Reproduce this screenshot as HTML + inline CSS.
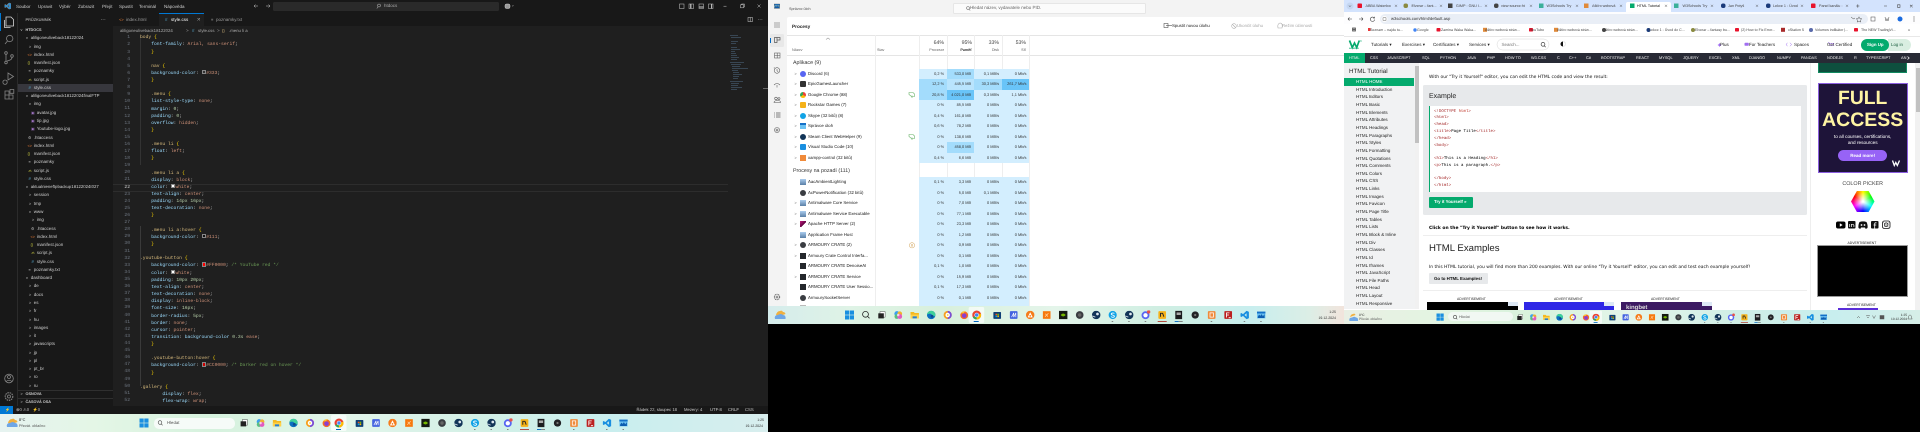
<!DOCTYPE html>
<html lang="cs"><head><meta charset="utf-8"><title>Screen</title>
<style>
html,body{margin:0;padding:0;background:#000;width:1920px;height:432px;overflow:hidden}
#w{position:relative;width:1920px;height:432px;overflow:hidden;filter:blur(.22px);font-family:"Liberation Sans",sans-serif;text-rendering:geometricPrecision;background:#000}
i{position:absolute;white-space:pre;line-height:0;font-style:normal}
.b{position:absolute}
svg{position:absolute;overflow:visible}
.vs{font-size:4.5px;color:#cccccc}
.vs i.k{color:#bbb;font-size:3.8px}
pre{position:absolute;margin:0;font:4.68px/7.115px "Liberation Mono",monospace;color:#cccccc;white-space:pre}
.s{color:#d7ba7d}.p{color:#9cdcfe}.v{color:#ce9178}.n{color:#b5cea8}.y{color:#ffd700}.c{color:#6a9955}
.sw{display:inline-block;width:2.4px;height:2.4px;border:.3px solid #888;margin-right:.3px;vertical-align:-.2px}
.r{position:absolute;left:787px;width:557px;height:10.5px;font-size:4.3px;color:#222}
.r>*{position:absolute;top:0;height:10.5px;line-height:10.5px;white-space:pre}
.r .nm{left:21px}
.r .ch{left:7.5px;color:#777;font-size:3.8px}
.r u{left:13px;top:2.2px;width:6px;height:6px;text-decoration:none;line-height:0}
.r s{text-decoration:none;background:#d3eefe;text-align:right;box-sizing:border-box;padding-right:2.6px;font-size:3.9px;color:#333}
.r s:nth-of-type(1){left:132px;width:27.7px}
.r s:nth-of-type(2){left:160px;width:26.7px}
.r s:nth-of-type(3){left:187px;width:27.7px}
.r s:nth-of-type(4){left:215px;width:27px}
.r s.m{background:#a3dcfc}.r s.h{background:#69c4f8}
.tm{font-size:4.3px;color:#333}
.ch3{font-size:3.7px;color:#444}
.bk{font-size:3.6px;color:#444}
.nv{font-size:3.9px;color:#f1f1f1}
.tp{font-size:4.5px;color:#222}
.sd{font-size:4.45px;color:#222}
.cd{font:4.1px "Liberation Mono",monospace;color:#000}
.cd b{font-weight:normal;color:#a52a2a}.cd em{font-style:normal;color:#c0392b}
.mn{font:4.45px "DejaVu Sans",sans-serif;color:#111}
.ad{font-size:3.4px;color:#222}
</style></head><body><div id="w">

<svg width="0" height="0" style="left:0;top:0"><defs>
<symbol id="tv" viewBox="0 0 10 10"><rect x="3" y="1" width="6" height="6.5" fill="#fff" stroke="#333" stroke-width=".5"/><rect x="1" y="3" width="6.5" height="6" fill="#222"/></symbol>
<symbol id="cp" viewBox="0 0 10 10"><circle cx="3.5" cy="3.5" r="3" fill="#3aa0f0"/><circle cx="6.8" cy="3.6" r="2.8" fill="#f0b030"/><circle cx="3.4" cy="6.8" r="2.8" fill="#58c080"/><circle cx="6.7" cy="6.7" r="2.9" fill="#e25ac0"/><circle cx="5" cy="5" r="1.5" fill="#fff" opacity=".7"/></symbol>
<symbol id="fo" viewBox="0 0 10 10"><path d="M0 1.5h4l1 1.2h5V9H0z" fill="#f5b921"/><path d="M0 4.5h10V9H0z" fill="#ffd24a"/><rect y="6.6" x="2.5" width="5" height="2.4" fill="#2a80d0"/></symbol>
<symbol id="ed" viewBox="0 0 10 10"><circle cx="5" cy="5" r="5" fill="#0c6fc0"/><path d="M0 5a5 5 0 0 1 10 0c0 2-4 2-4 .5C6 3 1.500 2.500 0 5z" fill="#3fd09a"/><circle cx="6" cy="6.500" r="1.700" fill="#0a4a90"/></symbol>
<symbol id="op" viewBox="0 0 10 10"><circle cx="5" cy="5" r="4.800" fill="#f7a020"/><path d="M5 .2a4.800 4.800 0 0 1 0 9.600z" fill="#7a4fd8"/><circle cx="5" cy="5" r="2.600" fill="#fff"/><circle cx="5" cy="5" r="1" fill="#f3ca30"/></symbol>
<symbol id="ff" viewBox="0 0 10 10"><circle cx="5" cy="5.300" r="4.600" fill="#f76a26"/><circle cx="5" cy="5.800" r="2.700" fill="#8a3fd0"/><path d="M1 3Q3 0 7 .8 4 2 5 3 2 3 1 3z" fill="#fcc030"/></symbol>
<symbol id="ch" viewBox="0 0 10 10"><circle cx="5" cy="5" r="5" fill="#ea4335"/><path d="M5 5L.7 7.500A5 5 0 0 0 5 10l2.500-.6z" fill="#34a853"/><path d="M5 5l4.800-1.500A5 5 0 0 1 5 10z" fill="#fbbc04"/><circle cx="5" cy="5" r="2.500" fill="#fff"/><circle cx="5" cy="5" r="1.900" fill="#4285f4"/></symbol>
<symbol id="st" viewBox="0 0 10 10"><rect x=".5" y="1.500" width="9" height="8" rx=".8" fill="#0f3f75"/><rect x="3" y="3.500" width="1.800" height="1.800" fill="#f25022"/><rect x="5.200" y="3.500" width="1.800" height="1.800" fill="#7fba00"/><rect x="3" y="5.700" width="1.800" height="1.800" fill="#00a4ef"/><rect x="5.200" y="5.700" width="1.800" height="1.800" fill="#ffb900"/></symbol>
<symbol id="ma" viewBox="0 0 10 10"><rect x=".5" y=".5" width="9" height="9" rx="1" fill="#4463e0"/><path d="M2.500 7.500L5 2.500v5M5 7.500L7.500 2.500v5" stroke="#fff" stroke-width=".8" fill="none"/></symbol>
<symbol id="av" viewBox="0 0 10 10"><circle cx="5" cy="5" r="5" fill="#f57c1c"/><path d="M5 1.800L8 7.800H2z" fill="#fff"/><circle cx="5" cy="6" r="1" fill="#f57c1c"/></symbol>
<symbol id="xo" viewBox="0 0 10 10"><rect x=".5" y=".5" width="9" height="9" fill="#f7780e"/><path d="M3 7L7 3M3.500 3.500L6.500 7" stroke="#ffd7a8" stroke-width=".8"/></symbol>
<symbol id="nv" viewBox="0 0 10 10"><rect width="10" height="10" fill="#151a12"/><path d="M2 5q3-3.500 6 0-3 3.500-6 0z" fill="#76b900"/></symbol>
<symbol id="ar" viewBox="0 0 10 10"><circle cx="5" cy="5" r="4.500" fill="#3a3d42"/><circle cx="5" cy="5" r="2" fill="#666"/></symbol>
<symbol id="sm" viewBox="0 0 10 10"><circle cx="5" cy="5" r="5" fill="#123558"/><circle cx="6.500" cy="3.800" r="1.600" fill="#dfe8ef"/><path d="M.3 6L4 7.500" stroke="#dfe8ef" stroke-width="1"/></symbol>
<symbol id="sk" viewBox="0 0 10 10"><circle cx="5" cy="5" r="4.800" fill="#11a3e6"/><path d="M7 3.200C6 2.300 3.300 2.500 3.300 3.900S7 5 7 6.500 4 8 3 6.800" stroke="#fff" stroke-width="1" fill="none"/></symbol>
<symbol id="di" viewBox="0 0 10 10"><circle cx="4.500" cy="5.500" r="4.400" fill="#5865f2"/><circle cx="4.500" cy="5.500" r="2.400" fill="#fff"/><circle cx="8" cy="1.800" r="1.900" fill="#e8504a"/></symbol>
<symbol id="rs" viewBox="0 0 10 10"><rect x=".5" y=".5" width="9" height="9" rx="1" fill="#f5b21a"/><path d="M3 7V3h2.500L7 7" stroke="#222" stroke-width="1.100" fill="none"/></symbol>
<symbol id="ac" viewBox="0 0 10 10"><rect x="1" width="8" height="10" fill="#1b1c1f"/><rect x="2.500" y="2" width="5" height="3" fill="#aaa"/></symbol>
<symbol id="bl" viewBox="0 0 10 10"><circle cx="5" cy="5" r="4.300" fill="#222326"/><circle cx="5" cy="5" r="1.300" fill="#777"/></symbol>
<symbol id="xa" viewBox="0 0 10 10"><rect x=".5" y=".5" width="9" height="9" rx="1" fill="#f08a3a"/><rect x="3" y="2.500" width="4" height="5" fill="none" stroke="#fff" stroke-width=".9"/></symbol>
<symbol id="fz" viewBox="0 0 10 10"><rect x=".5" y=".5" width="9" height="9" rx=".8" fill="#bb2020"/><path d="M3 8V2.500h3.500M3 5h3M5.500 8.200h2.500" stroke="#fff" stroke-width="1" fill="none"/></symbol>
<symbol id="vsc" viewBox="0 0 10 10"><path d="M7.200 0L10 1.300v7.400L7.200 10 3 6 1.200 7.400 0 6.700V3.300l1.200-.7L3 4zM7.200 3L4.800 5l2.400 2z" fill="#1a8fe0"/></symbol>
<symbol id="tm" viewBox="0 0 10 10"><rect y="1" width="10" height="8" fill="#6cc2f2"/><rect y="1" width="10" height="2.200" fill="#1470c8"/><path d="M1 7l1.500-2.500L4 6l1.500-2L7 6.500 9 4v4.500H1z" fill="#0c5cb0"/></symbol>
<g id="tb">
<rect x="87" y="-8" width="15.500" height="16" rx="1.500" fill="#fff" opacity=".65"/>
<use href="#tv" x="-4.250" y="-4.250" width="8.500" height="8.500"/><use href="#cp" x="12.250" y="-4.250" width="8.500" height="8.500"/><use href="#fo" x="28.750" y="-4.250" width="8.500" height="8.500"/><use href="#ed" x="45.250" y="-4.250" width="8.500" height="8.500"/><use href="#op" x="61.750" y="-4.250" width="8.500" height="8.500"/><use href="#ff" x="78.250" y="-4.250" width="8.500" height="8.500"/><use href="#ch" x="90.500" y="-4.500" width="9" height="9"/><use href="#st" x="111.250" y="-4.250" width="8.500" height="8.500"/><use href="#ma" x="127.750" y="-4.250" width="8.500" height="8.500"/><use href="#av" x="144.250" y="-4.250" width="8.500" height="8.500"/><use href="#xo" x="160.750" y="-4.250" width="8.500" height="8.500"/><use href="#nv" x="177.250" y="-4.250" width="8.500" height="8.500"/><use href="#ar" x="193.750" y="-4.250" width="8.500" height="8.500"/><use href="#sm" x="210.250" y="-4.250" width="8.500" height="8.500"/><use href="#sk" x="226.750" y="-4.250" width="8.500" height="8.500"/><use href="#sm" x="243.250" y="-4.250" width="8.500" height="8.500"/><use href="#di" x="259.750" y="-4.700" width="9" height="9"/><use href="#rs" x="276.250" y="-4.250" width="8.500" height="8.500"/><use href="#ac" x="292.750" y="-4.250" width="8.500" height="8.500"/><use href="#bl" x="309.250" y="-4.250" width="8.500" height="8.500"/><use href="#xa" x="325.750" y="-4.250" width="8.500" height="8.500"/><use href="#fz" x="342.250" y="-4.250" width="8.500" height="8.500"/><use href="#vsc" x="358.750" y="-4.250" width="8.500" height="8.500"/><use href="#tm" x="375.250" y="-4.250" width="8.500" height="8.500"/>
<rect x="92" y="6" width="5" height="1" fill="#0067c0"/><rect x="276" y="6" width="9" height=".9" fill="#b03a2e"/><rect x="293" y="6" width="4" height=".9" fill="#0067c0"/><rect x="297" y="6" width="4" height=".9" fill="#777"/>
<g fill="#777"><rect x="230" y="6" width="1.500" height=".9"/><rect x="246.500" y="6" width="1.500" height=".9"/><rect x="263" y="6" width="1.500" height=".9"/><rect x="329" y="6" width="1.500" height=".9"/><rect x="362" y="6" width="1.500" height=".9"/><rect x="378.500" y="6" width="1.500" height=".9"/></g>
</g>
</defs></svg>

<!-- ===== MONITOR 1: VS CODE ===== -->
<div class="b" style="left:0;top:0;width:768px;height:432px;background:#1f1f1f"></div>
<div class="b" style="left:0;top:0;width:768px;height:13px;background:#181818"></div>
<div class="b" style="left:0;top:13px;width:113px;height:393px;background:#181818"></div>
<div class="b" style="left:17px;top:13px;width:.4px;height:393px;background:#2b2b2b"></div>
<div class="b" style="left:113px;top:13px;width:655px;height:13px;background:#181818"></div>
<div class="b" style="left:159px;top:13px;width:45px;height:13px;background:#1f1f1f;border-top:.5px solid #0078d4;box-sizing:border-box"></div>
<div class="b" style="left:0;top:13px;width:1px;height:18px;background:#0078d4"></div>
<div class="b" style="left:273px;top:2px;width:226px;height:9px;background:#2a2a2a;border-radius:1.500px"></div>
<div class="b" style="left:18px;top:84px;width:95px;height:8px;background:#37373d"></div>
<div class="b" style="left:113px;top:184px;width:615px;height:7.500px;border-top:.4px solid #2d2d2d;border-bottom:.4px solid #2d2d2d;box-sizing:border-box"></div>
<div class="b" style="left:139.500px;top:35px;width:.4px;height:130px;background:#333"></div>
<div class="b" style="left:139.500px;top:226px;width:.4px;height:160px;background:#3a3a3a"></div>
<div class="b" style="left:0;top:406px;width:768px;height:8px;background:#181818"></div>
<div class="b" style="left:0;top:406px;width:13px;height:8px;background:#0078d4"></div>
<div class="b" style="left:18px;top:389.500px;width:95px;height:.4px;background:#2f2f2f"></div>
<div class="b" style="left:18px;top:398px;width:95px;height:.4px;background:#2f2f2f"></div>

<svg style="left:0;top:0" width="768" height="432" fill="none" stroke="#858585" stroke-width=".8">
<use href="#vsc" x="4.500" y="2.800" width="6.500" height="6.500"/>
<path d="M6 17h5l2.500 2.500V26H6zM4.500 20v7.500h6" stroke="#d7d7d7"/>
<circle cx="9.700" cy="38.500" r="3.200"/><path d="M7.500 41l-2.500 3"/>
<circle cx="6" cy="53" r="1.300"/><circle cx="6" cy="62.500" r="1.300"/><circle cx="12" cy="56" r="1.300"/><path d="M6 54.500v6.500M12 57.500q0 2.500-5 3.500"/>
<path d="M8 73l5.500 3.500L8 80zM5 80a2.200 2.200 0 1 0 .1 0"/>
<path d="M5 91h4v4h4v4H5zM5 95h4v4M10 89.500h3.800v3.800H10z"/>
<circle cx="9" cy="378.500" r="4.300"/><circle cx="9" cy="377" r="1.500"/><path d="M6 381.500q3-2.500 6 0"/>
<circle cx="9" cy="396.500" r="1.500"/><circle cx="9" cy="396.500" r="3.800" stroke-dasharray="1.500 .8" stroke-width="1.100"/>
<g stroke="#cccccc" stroke-width=".5"><path d="M254 6h4M254 6l1.500-1.500M254 6l1.500 1.500M270 6h-4M270 6l-1.500-1.500M270 6l-1.500 1.500"/>
<circle cx="379" cy="5.500" r="1.500"/><path d="M378 7l-1.200 1.500"/>
<rect x="505" y="4" width="5" height="4.500" rx="1.500" fill="#999"/><path d="M512 5.500l.8.8.8-.8"/>
<rect x="679.500" y="4" width="4.500" height="4.500"/><rect x="689" y="4" width="4.500" height="4.500"/><path d="M690.800 4v4.500" stroke-width="1.200"/><rect x="699" y="4" width="4.500" height="4.500"/><path d="M699 7h4.500" stroke-width="1"/><rect x="708.500" y="4" width="4.500" height="4.500"/><path d="M711.500 4v4.500" stroke-width=".9"/>
<path d="M723.500 6.200h3"/><rect x="740.500" y="4.800" width="3" height="3"/><path d="M741.500 4.800v-.8h3v3h-.9"/><path d="M757.500 4.500l3 3m0-3l-3 3"/>
<rect x="748" y="17.500" width="4.500" height="4"/><path d="M750.200 17.500v4"/><path d="M758 19.500h.6M759.800 19.500h.6M761.600 19.500h.6"/>
<path d="M101 19.500h.6M102.800 19.500h.6M104.600 19.500h.6"/>
<path d="M197.500 18l2.500 2.500m0-2.500l-2.500 2.500"/></g>
<g stroke="none" fill="#5a7a9a" opacity=".85"><rect x="730" y="35" width="8" height=".5"/><rect x="731" y="37" width="10" height=".5"/><rect x="731" y="41" width="7" height=".5"/><rect x="731" y="43" width="5" height=".5"/><rect x="731" y="47" width="6" height=".5"/><rect x="731" y="49" width="9" height=".5"/><rect x="731" y="51" width="4" height=".5"/><rect x="731" y="53" width="5" height=".5"/><rect x="731" y="55" width="6" height=".5"/><rect x="731" y="57" width="8" height=".5"/><rect x="731" y="59" width="6" height=".5"/><rect x="730" y="62" width="14" height=".5"/><rect x="731" y="64" width="10" height=".5"/><rect x="732" y="66" width="8" height=".5"/><rect x="732" y="68" width="16" height=".5"/><rect x="732" y="70" width="6" height=".5"/><rect x="733" y="72" width="6" height=".5"/><rect x="733" y="74" width="9" height=".5"/><rect x="733" y="76" width="6" height=".5"/><rect x="733" y="78" width="5" height=".5"/><rect x="730" y="81" width="13" height=".5"/><rect x="731" y="83" width="8" height=".5"/><rect x="731" y="85" width="7" height=".5"/><rect x="731" y="87" width="11" height=".5"/><rect x="731" y="89" width="6" height=".5"/></g>
<rect x="763" y="88" width="5" height=".7" fill="#888" stroke="none"/>
</svg>

<div class="vs">
<i style="left:16px;top:6.500px">Soubor</i><i style="left:38px;top:6.500px">Upravit</i><i style="left:59px;top:6.500px">Výběr</i><i style="left:78px;top:6.500px">Zobrazit</i><i style="left:102px;top:6.500px">Přejít</i><i style="left:119px;top:6.500px">Spustit</i><i style="left:139px;top:6.500px">Terminál</i><i style="left:164px;top:6.500px">Nápověda</i><i style="left:384px;top:6px;color:#aaa">htdocs</i>
<i style="left:25.500px;top:19.800px;font-size:3.900px">PRŮZKUMNÍK</i>
<i style="left:126px;top:20px;color:#999">index.html</i><i style="left:171px;top:20px;color:#fff">style.css</i><i style="left:216px;top:20px;color:#999">poznamky.txt</i>
<i style="left:119px;top:20px;color:#e37933;font-size:4px">&lt;&gt;</i><i style="left:165px;top:20px;color:#519aba;font-size:4.500px">#</i><i style="left:211px;top:20px;color:#999;font-size:4px">≡</i>
<i style="left:120px;top:30.500px;color:#a9a9a9;font-size:4.300px">aliligoneuliveback18122024</i><i style="left:186px;top:30.500px;color:#999">&gt;</i><i style="left:192px;top:30.500px;color:#519aba">#</i><i style="left:198px;top:30.500px;color:#a9a9a9;font-size:4.300px">style.css</i><i style="left:217px;top:30.500px;color:#999">&gt;</i><i style="left:222px;top:30.500px;color:#d7ba7d;font-size:4px">{}</i><i style="left:229px;top:30.500px;color:#a9a9a9;font-size:4.300px">.menu li a</i>

<i style="left:25.500px;top:30px;font-weight:bold;font-size:3.800px">HTDOCS</i><i class="k" style="left:20.500px;top:30px">v</i>
<i class="k" style="left:26px;top:38.300px">v</i><i style="left:30.700px;top:38.300px;font-size:4.300px">aliligoneuliveback18122024</i>
<i class="k" style="left:29px;top:46.500px">&gt;</i><i style="left:33.700px;top:46.500px">img</i>
<i class="k" style="left:27.500px;top:54.800px;color:#e37933">&lt;&gt;</i><i style="left:33.700px;top:54.800px">index.html</i>
<i class="k" style="left:27.500px;top:63.100px;color:#cbcb41">{}</i><i style="left:33.700px;top:63.100px">manifest.json</i>
<i class="k" style="left:28.500px;top:71.400px">≡</i><i style="left:33.700px;top:71.400px">poznamky</i>
<i class="k" style="left:28px;top:79.600px;color:#cbcb41;font-size:3px">JS</i><i style="left:33.700px;top:79.600px">script.js</i>
<i class="k" style="left:28.500px;top:87.900px;color:#519aba;font-size:4.300px">#</i><i style="left:33.700px;top:87.900px">style.css</i>
<i class="k" style="left:26px;top:96.200px">v</i><i style="left:30.700px;top:96.200px;font-size:4.300px">aliligoneuliveback18122024finalFTP</i>
<i class="k" style="left:29px;top:104.400px">v</i><i style="left:33.700px;top:104.400px">img</i>
<i class="k" style="left:31px;top:112.700px;color:#a074c4">▣</i><i style="left:36.700px;top:112.700px">avatar.jpg</i>
<i class="k" style="left:31px;top:121px;color:#a074c4">▣</i><i style="left:36.700px;top:121px">tip.jpg</i>
<i class="k" style="left:31px;top:129.200px;color:#a074c4">▣</i><i style="left:36.700px;top:129.200px">Youtube-logo.jpg</i>
<i class="k" style="left:28px;top:137.500px">⚙</i><i style="left:33.700px;top:137.500px">.htaccess</i>
<i class="k" style="left:27.500px;top:145.800px;color:#e37933">&lt;&gt;</i><i style="left:33.700px;top:145.800px">index.html</i>
<i class="k" style="left:27.500px;top:154.100px;color:#cbcb41">{}</i><i style="left:33.700px;top:154.100px">manifest.json</i>
<i class="k" style="left:28.500px;top:162.300px">≡</i><i style="left:33.700px;top:162.300px">poznamky</i>
<i class="k" style="left:28px;top:170.600px;color:#cbcb41;font-size:3px">JS</i><i style="left:33.700px;top:170.600px">script.js</i>
<i class="k" style="left:28.500px;top:178.900px;color:#519aba;font-size:4.300px">#</i><i style="left:33.700px;top:178.900px">style.css</i>
<i class="k" style="left:26px;top:187.100px">v</i><i style="left:30.700px;top:187.100px;font-size:4.300px">aktualnieneftpbackup18122024t027</i>
<i class="k" style="left:29px;top:195.400px">&gt;</i><i style="left:33.700px;top:195.400px">session</i>
<i class="k" style="left:29px;top:203.700px">&gt;</i><i style="left:33.700px;top:203.700px">tmp</i>
<i class="k" style="left:29px;top:211.900px">v</i><i style="left:33.700px;top:211.900px">www</i>
<i class="k" style="left:32px;top:220.200px">&gt;</i><i style="left:36.700px;top:220.200px">img</i>
<i class="k" style="left:31px;top:228.500px">⚙</i><i style="left:36.700px;top:228.500px">.htaccess</i>
<i class="k" style="left:30.500px;top:236.800px;color:#e37933">&lt;&gt;</i><i style="left:36.700px;top:236.800px">index.html</i>
<i class="k" style="left:30.500px;top:245px;color:#cbcb41">{}</i><i style="left:36.700px;top:245px">manifest.json</i>
<i class="k" style="left:31px;top:253.300px;color:#cbcb41;font-size:3px">JS</i><i style="left:36.700px;top:253.300px">script.js</i>
<i class="k" style="left:31.500px;top:261.600px;color:#519aba;font-size:4.300px">#</i><i style="left:36.700px;top:261.600px">style.css</i>
<i class="k" style="left:28.500px;top:269.800px">≡</i><i style="left:33.700px;top:269.800px">poznamky.txt</i>
<i class="k" style="left:26px;top:278.100px">v</i><i style="left:30.700px;top:278.100px">dashboard</i>
<i class="k" style="left:29px;top:286.400px">&gt;</i><i style="left:33.700px;top:286.400px">de</i>
<i class="k" style="left:29px;top:294.600px">&gt;</i><i style="left:33.700px;top:294.600px">docs</i>
<i class="k" style="left:29px;top:302.900px">&gt;</i><i style="left:33.700px;top:302.900px">es</i>
<i class="k" style="left:29px;top:311.200px">&gt;</i><i style="left:33.700px;top:311.200px">fr</i>
<i class="k" style="left:29px;top:319.500px">&gt;</i><i style="left:33.700px;top:319.500px">hu</i>
<i class="k" style="left:29px;top:327.700px">&gt;</i><i style="left:33.700px;top:327.700px">images</i>
<i class="k" style="left:29px;top:336px">&gt;</i><i style="left:33.700px;top:336px">it</i>
<i class="k" style="left:29px;top:344.300px">&gt;</i><i style="left:33.700px;top:344.300px">javascripts</i>
<i class="k" style="left:29px;top:352.500px">&gt;</i><i style="left:33.700px;top:352.500px">jp</i>
<i class="k" style="left:29px;top:360.800px">&gt;</i><i style="left:33.700px;top:360.800px">pl</i>
<i class="k" style="left:29px;top:369.100px">&gt;</i><i style="left:33.700px;top:369.100px">pt_br</i>
<i class="k" style="left:29px;top:377.300px">&gt;</i><i style="left:33.700px;top:377.300px">ro</i>
<i class="k" style="left:29px;top:385.600px">&gt;</i><i style="left:33.700px;top:385.600px">ru</i>
<i class="k" style="left:20.500px;top:393.700px">&gt;</i><i style="left:25.500px;top:393.700px;font-weight:bold;font-size:3.800px">OSNOVA</i>
<i class="k" style="left:20.500px;top:402px">&gt;</i><i style="left:25.500px;top:402px;font-weight:bold;font-size:3.800px">ČASOVÁ OSA</i>

<i style="left:16px;top:410px;font-size:4.200px">⊗0 ⚠0   ⚡0</i><i style="left:5px;top:410px;font-size:4px;color:#fff">⚡</i>
<i style="left:636.500px;top:410px;font-size:4.200px">Řádek 22, sloupec 18</i><i style="left:684px;top:410px;font-size:4.200px">Mezery: 4</i><i style="left:710px;top:410px;font-size:4.200px">UTF-8</i><i style="left:728px;top:410px;font-size:4.200px">CRLF</i><i style="left:745px;top:410px;font-size:4.200px">CSS</i>
</div>

<pre style="left:113px;top:34.300px;width:17px;text-align:right;color:#6e7681">1
2
3
4
5
6
7
8
9
10
11
12
13
14
15
16
17
18
19
20
21
<span style="color:#ccc">22</span>
23
24
25
26
27
28
29
30
31
32
33
34
35
36
37
38
39
40
41
42
43
44
45
46
47
48
49
50
51
52</pre>
<pre style="left:140px;top:34.300px"><span class="s">body</span> <span class="y">{</span>
    <span class="p">font-family</span>: <span class="v">Arial, sans-serif</span>;
    <span class="y">}</span>

    <span class="s">nav</span> <span class="y">{</span>
    <span class="p">background-color</span>: <span class="sw" style="background:#333"></span><span class="v">#333</span>;
    <span class="y">}</span>

    <span class="s">.menu</span> <span class="y">{</span>
    <span class="p">list-style-type</span>: <span class="v">none</span>;
    <span class="p">margin</span>: <span class="n">0</span>;
    <span class="p">padding</span>: <span class="n">0</span>;
    <span class="p">overflow</span>: <span class="v">hidden</span>;
    <span class="y">}</span>

    <span class="s">.menu li</span> <span class="y">{</span>
    <span class="p">float</span>: <span class="v">left</span>;
    <span class="y">}</span>

    <span class="s">.menu li a</span> <span class="y">{</span>
    <span class="p">display</span>: <span class="v">block</span>;
    <span class="p">color</span>: <span class="sw" style="background:#fff"></span><span class="v">white</span>;
    <span class="p">text-align</span>: <span class="v">center</span>;
    <span class="p">padding</span>: <span class="n">14px 16px</span>;
    <span class="p">text-decoration</span>: <span class="v">none</span>;
    <span class="y">}</span>

    <span class="s">.menu li a:hover</span> <span class="y">{</span>
    <span class="p">background-color</span>: <span class="sw" style="background:#111"></span><span class="v">#111</span>;
    <span class="y">}</span>

<span class="s">.youtube-button</span> <span class="y">{</span>
    <span class="p">background-color</span>: <span class="sw" style="background:#f00"></span><span class="v">#FF0000</span>; <span class="c">/* YouTube red */</span>
    <span class="p">color</span>: <span class="sw" style="background:#fff"></span><span class="v">white</span>;
    <span class="p">padding</span>: <span class="n">10px 20px</span>;
    <span class="p">text-align</span>: <span class="v">center</span>;
    <span class="p">text-decoration</span>: <span class="v">none</span>;
    <span class="p">display</span>: <span class="v">inline-block</span>;
    <span class="p">font-size</span>: <span class="n">16px</span>;
    <span class="p">border-radius</span>: <span class="n">5px</span>;
    <span class="p">border</span>: <span class="v">none</span>;
    <span class="p">cursor</span>: <span class="v">pointer</span>;
    <span class="p">transition</span>: <span class="p">background-color</span> <span class="n">0.3s</span> <span class="v">ease</span>;
    <span class="y">}</span>

    <span class="s">.youtube-button:hover</span> <span class="y">{</span>
    <span class="p">background-color</span>: <span class="sw" style="background:#c00"></span><span class="v">#CC0000</span>; <span class="c">/* Darker red on hover */</span>
    <span class="y">}</span>

<span class="s">.gallery</span> <span class="y">{</span>
        <span class="p">display</span>: <span class="v">flex</span>;
        <span class="p">flex-wrap</span>: <span class="v">wrap</span>;</pre>

<!-- taskbar 1 -->
<div class="b" style="left:0;top:414px;width:768px;height:18px;background:linear-gradient(90deg,#e6f3f0 0,#e4f6e6 12%,#d6f2de 28%,#e2f5ea 45%,#d3f0e6 62%,#c9eeee 80%,#d8eeee 100%)"></div>
<div class="b" style="left:154px;top:418px;width:81px;height:10.500px;background:#f6fbf8;border-radius:5px"></div>
<svg style="left:0;top:414px" width="768" height="18">
<path d="M8 9q1-4 4-4 2-1 3 1 2 0 2.500 2-7 3-9.500 1z" fill="#f0b040"/><path d="M7 13q-1-4 3-4 3-2 5 0 3 0 2.500 4z" fill="#6ea6e6"/>
<g fill="#1a8fe0"><rect x="139.500" y="4.500" width="4.200" height="4.200"/><rect x="144.300" y="4.500" width="4.200" height="4.200"/><rect x="139.500" y="9.300" width="4.200" height="4.200"/><rect x="144.300" y="9.300" width="4.200" height="4.200"/></g>
<circle cx="160" cy="8.500" r="1.800" fill="none" stroke="#444" stroke-width=".6"/><path d="M161.300 10l1.300 1.300" stroke="#444" stroke-width=".6"/>
<use href="#tb" x="244" y="9"/></svg>
<i style="left:19px;top:420px;font-size:3.800px;color:#222">8°C</i><i style="left:19px;top:425.500px;font-size:3.800px;color:#555">Převát. oblačno</i>
<i style="left:167px;top:423px;font-size:4.300px;color:#555">Hledat</i>
<i style="right:1156px;top:420px;font-size:3.500px;color:#333">1:25</i><i style="right:1157px;top:426px;font-size:3.500px;color:#333">19.12.2024</i>

<!-- ===== MONITOR 2: TASK MANAGER ===== -->
<div class="b" style="left:768px;top:0;width:576px;height:324px;background:#f3f3f3"></div>
<div class="b" style="left:787px;top:17px;width:557px;height:290px;background:#fff;border-top-left-radius:2px"></div>
<div class="b" style="left:953px;top:3px;width:193px;height:10.500px;background:#fbfbfb;border:.3px solid #e6e6e6;border-radius:1.500px;box-sizing:border-box"></div>
<div class="b" style="left:770px;top:34px;width:14px;height:12.500px;background:#e8e8e8;border-radius:1.500px"></div>
<div class="b" style="left:769.500px;top:37.500px;width:1px;height:5.500px;background:#0067c0"></div>
<div class="b" style="left:787px;top:35px;width:557px;height:.4px;background:#e5e5e5"></div>
<div class="b" style="left:787px;top:54.500px;width:557px;height:.4px;background:#e5e5e5"></div>
<div class="b" style="left:874.800px;top:35px;width:.4px;height:272px;background:#eee"></div>
<div class="b" style="left:919px;top:35px;width:.4px;height:272px;background:#eee"></div>
<div class="b" style="left:946.700px;top:35px;width:.4px;height:272px;background:#eee"></div>
<div class="b" style="left:974px;top:35px;width:.4px;height:272px;background:#eee"></div>
<div class="b" style="left:1001.600px;top:35px;width:.4px;height:272px;background:#eee"></div>
<div class="b" style="left:1028.800px;top:35px;width:.4px;height:272px;background:#eee"></div>
<svg style="left:768px;top:0" width="576" height="324" fill="none" stroke="#555" stroke-width=".55">
<use href="#tm" x="6" y="3.500" width="6" height="5.500"/>
<path d="M6 23h6M6 25h6M6 27h6"/><path d="M6.500 37.500h2.500v5H6.500zM9 37.500h3v2.500H9z" stroke-width=".7"/><rect x="6.500" y="53" width="5.500" height="5"/><path d="M6.500 55.500h5.500M9.200 53v5"/><circle cx="9" cy="70.500" r="2.800"/><path d="M9 69v1.800l1.200.8M5.800 68l1-.2"/><path d="M6 85q3-3 6 0M9 85v2.500"/><circle cx="8" cy="98.500" r="1.300"/><circle cx="11" cy="98.500" r="1"/><path d="M6 102.500q0-2 4-2 2.500 0 2.500 2z"/><path d="M6 113h.8M6 115h.8M6 117h.8M8 113h4.500M8 115h4.500M8 117h4.500" stroke-width=".7"/><circle cx="9" cy="130" r="2.500"/><circle cx="9" cy="130" r="1" /><circle cx="9" cy="297" r="2.700" stroke-dasharray="1.100 .6" stroke-width=".9"/><circle cx="9" cy="297" r="1"/>
<path d="M58 39.500l2-1.500 2 1.500" stroke="#999"/>
<circle cx="200" cy="8" r="1.400" stroke="#666"/><path d="M201 9.200l1.200 1.200" stroke="#666"/>
<g stroke="#67b167" stroke-width=".6"><path d="M141 92.500h4l1.500 1.500v2.500h-3l-2.500-2z M144 95.500v2.500"/><path d="M141 134.500h4l1.500 1.500v2.500h-3l-2.500-2z M144 137.500v2.500"/></g>
<circle cx="144" cy="245.300" r="2.600" stroke="#d8b070"/><path d="M143.300 244v2.600M144.700 244v2.600" stroke="#d8b070"/>
<rect x="396" y="23.500" width="4" height="4" stroke="#444"/><path d="M398 25.500h6" stroke="#444"/>
<circle cx="466" cy="26" r="2.300" stroke="#aaa"/><path d="M464.500 24.500l3 3" stroke="#aaa"/>
<path d="M510 28q-1-4 2-5 3 0 2 5z" stroke="#aaa"/>
</svg>
<div class="tm">
<i style="left:789px;top:8.500px;font-size:3.700px;color:#555">Správce úloh</i>
<i style="left:970px;top:8.300px;font-size:4.500px;color:#666">Hledat název, vydavatele nebo PID.</i>
<i style="left:792px;top:26.500px;font-size:4.700px;font-weight:bold;color:#222">Procesy</i>
<i style="left:1172px;top:26px;color:#222">Spustit novou úlohu</i><i style="left:1237px;top:26px;color:#aaa">Ukončit úlohu</i><i style="left:1282px;top:26px;color:#aaa">Režim účinnosti</i>
<i style="left:792px;top:50px;font-size:3.700px;color:#666">Název</i><i style="left:877px;top:50px;font-size:3.700px;color:#666">Stav</i>
<i style="right:976px;top:42.500px;font-size:5.200px;color:#444">64%</i><i style="right:948px;top:42.500px;font-size:5.200px;color:#444">95%</i><i style="right:921px;top:42.500px;font-size:5.200px;color:#444">33%</i><i style="right:894px;top:42.500px;font-size:5.200px;color:#444">53%</i>
<i style="right:976px;top:50px;font-size:3.700px;color:#666">Procesor</i><i style="right:948px;top:50px;font-size:3.700px;font-weight:bold;color:#333">Paměť</i><i style="right:921px;top:50px;font-size:3.700px;color:#666">Disk</i><i style="right:894px;top:50px;font-size:3.700px;color:#666">Síť</i>
<i style="left:793px;top:62.500px;font-size:5.300px;color:#333">Aplikace (9)</i>
<i style="left:793px;top:171.300px;font-size:5.300px;color:#333">Procesy na pozadí (111)</i>
</div>
<div class="r" style="top:68.500px"><b class="ch" style="font-weight:normal">&gt;</b><u style="background:#5865f2;border-radius:50%"></u><span class="nm">Discord (6)</span><s>0,2 %</s><s class="m">533,0 MB</s><s>0,1 MB/s</s><s>0 Mb/s</s></div>
<div class="r" style="top:79px"><b class="ch" style="font-weight:normal">&gt;</b><u style="background:#333;border-radius:1px"></u><span class="nm">EpicGamesLauncher</span><s class="m">12,2 %</s><s class="m" style="background:#b9e4fd">445,5 MB</s><s class="m">30,3 MB/s</s><s class="h">261,7 Mb/s</s></div>
<div class="r" style="top:89.500px"><b class="ch" style="font-weight:normal">&gt;</b><u style="background:conic-gradient(#ea4335 0 33%,#fbbc04 33% 66%,#34a853 66%);border-radius:50%"></u><span class="nm">Google Chrome (88)</span><s class="m">20,8 %</s><s class="h">4 021,0 MB</s><s>0,3 MB/s</s><s>1,1 Mb/s</s></div>
<div class="r" style="top:100px"><b class="ch" style="font-weight:normal">&gt;</b><u style="background:#f5b21a;border-radius:1px"></u><span class="nm">Rockstar Games (7)</span><s>0 %</s><s>85,5 MB</s><s>0 MB/s</s><s>0 Mb/s</s></div>
<div class="r" style="top:110.500px"><b class="ch" style="font-weight:normal">&gt;</b><u style="background:#11a3e6;border-radius:50%"></u><span class="nm">Skype (32 bitů) (8)</span><s>0,4 %</s><s>161,8 MB</s><s>0 MB/s</s><s>0 Mb/s</s></div>
<div class="r" style="top:121px"><b class="ch" style="font-weight:normal">&gt;</b><u style="background:linear-gradient(#1470c8 35%,#6cc2f2 35%)"></u><span class="nm">Správce úloh</span><s>0,6 %</s><s>78,2 MB</s><s>0 MB/s</s><s>0 Mb/s</s></div>
<div class="r" style="top:131.500px"><b class="ch" style="font-weight:normal">&gt;</b><u style="background:#123558;border-radius:50%"></u><span class="nm">Steam Client WebHelper (9)</span><s>0 %</s><s>138,6 MB</s><s>0 MB/s</s><s>0 Mb/s</s></div>
<div class="r" style="top:142px"><b class="ch" style="font-weight:normal">&gt;</b><u style="background:#1a8fe0;border-radius:1px"></u><span class="nm">Visual Studio Code (10)</span><s>0 %</s><s class="m">458,0 MB</s><s>0 MB/s</s><s>0 Mb/s</s></div>
<div class="r" style="top:152.500px"><b class="ch" style="font-weight:normal">&gt;</b><u style="background:#f08a3a"></u><span class="nm">xampp-control (32 bitů)</span><s>0,4 %</s><s>6,6 MB</s><s>0 MB/s</s><s>0 Mb/s</s></div>

<div class="r" style="top:177px"><u style="background:linear-gradient(#aaccee,#5a7fa6)"></u><span class="nm">AacAmbientLighting</span><s>0,1 %</s><s>3,3 MB</s><s>0 MB/s</s><s>0 Mb/s</s></div>
<div class="r" style="top:187.500px"><u style="background:#3a3d42;border-radius:50%"></u><span class="nm">AcPowerNotification (32 bitů)</span><s>0 %</s><s>5,0 MB</s><s>0,1 MB/s</s><s>0 Mb/s</s></div>
<div class="r" style="top:198px"><b class="ch" style="font-weight:normal">&gt;</b><u style="background:linear-gradient(#aaccee,#5a7fa6)"></u><span class="nm">Antimalware Core Service</span><s>0 %</s><s>7,0 MB</s><s>0 MB/s</s><s>0 Mb/s</s></div>
<div class="r" style="top:208.500px"><b class="ch" style="font-weight:normal">&gt;</b><u style="background:linear-gradient(#aaccee,#5a7fa6)"></u><span class="nm">Antimalware Service Executable</span><s>0 %</s><s>77,1 MB</s><s>0 MB/s</s><s>0 Mb/s</s></div>
<div class="r" style="top:219px"><b class="ch" style="font-weight:normal">&gt;</b><u style="background:linear-gradient(135deg,#c02080,#600040 60%,#fff 60%)"></u><span class="nm">Apache HTTP Server (2)</span><s>0 %</s><s>23,3 MB</s><s>0 MB/s</s><s>0 Mb/s</s></div>
<div class="r" style="top:229.500px"><u style="background:linear-gradient(#aaccee,#5a7fa6)"></u><span class="nm">Application Frame Host</span><s>0 %</s><s>1,2 MB</s><s>0 MB/s</s><s>0 Mb/s</s></div>
<div class="r" style="top:240px"><b class="ch" style="font-weight:normal">&gt;</b><u style="background:#3a3d42;border-radius:50%"></u><span class="nm">ARMOURY CRATE (2)</span><s>0 %</s><s>0,9 MB</s><s>0 MB/s</s><s>0 Mb/s</s></div>
<div class="r" style="top:250.500px"><b class="ch" style="font-weight:normal">&gt;</b><u style="background:#24272b"></u><span class="nm">Armoury Crate Control Interfa...</span><s>0 %</s><s>0,1 MB</s><s>0 MB/s</s><s>0 Mb/s</s></div>
<div class="r" style="top:261px"><u style="background:#24272b"></u><span class="nm">ARMOURY CRATE DenoiseAI</span><s>0,1 %</s><s>1,0 MB</s><s>0 MB/s</s><s>0 Mb/s</s></div>
<div class="r" style="top:271.500px"><b class="ch" style="font-weight:normal">&gt;</b><u style="background:#24272b"></u><span class="nm">ARMOURY CRATE Service</span><s>0 %</s><s>15,9 MB</s><s>0 MB/s</s><s>0 Mb/s</s></div>
<div class="r" style="top:282px"><u style="background:#24272b"></u><span class="nm">ARMOURY CRATE User Sessio...</span><s>0,1 %</s><s>17,3 MB</s><s>0 MB/s</s><s>0 Mb/s</s></div>
<div class="r" style="top:292.500px"><u style="background:#3a3d42;border-radius:50%"></u><span class="nm">ArmourySocketServer</span><s>0 %</s><s>0,1 MB</s><s>0 MB/s</s><s>0 Mb/s</s></div>
<div class="r" style="top:303px"><u style="background:#bbb"></u><s></s><s></s><s></s><s></s></div>

<!-- taskbar 2 -->
<div class="b" style="left:768px;top:306px;width:576px;height:18px;background:linear-gradient(90deg,#d5ecec 0,#dff3e6 14%,#d8f0dc 30%,#e4f5ea 50%,#cfeee2 68%,#c8eeee 84%,#dceee6 94%,#f2e4dc 100%)"></div>
<svg style="left:768px;top:306px" width="576" height="18">
<path d="M8 9q1-4 4-4 2-1 3 1 2 0 2.500 2-7 3-9.500 1z" fill="#f0b040"/><path d="M7 13q-1-4 3-4 3-2 5 0 3 0 2.500 4z" fill="#6ea6e6"/>
<g fill="#1a8fe0"><rect x="77" y="4.500" width="4.200" height="4.200"/><rect x="81.800" y="4.500" width="4.200" height="4.200"/><rect x="77" y="9.300" width="4.200" height="4.200"/><rect x="81.800" y="9.300" width="4.200" height="4.200"/></g>
<circle cx="97.500" cy="8.300" r="2.900" fill="none" stroke="#222" stroke-width=".8"/><path d="M99.700 10.500l1.800 1.800" stroke="#222" stroke-width=".8"/>
<use href="#tb" x="113.700" y="9"/></svg>
<i style="right:584px;top:312px;font-size:3.500px;color:#333">1:25</i><i style="right:584px;top:318px;font-size:3.500px;color:#333">19.12.2024</i>

<!-- ===== MONITOR 3: BROWSER ===== -->
<div class="b" style="left:1344px;top:0;width:576px;height:324px;background:#fff"></div>
<div class="b" style="left:1344px;top:0;width:576px;height:12px;background:#d3e3fd"></div>
<div class="b" style="left:1626px;top:2px;width:45px;height:10.500px;background:#fff;border-radius:2px 2px 0 0"></div>
<div class="b" style="left:1344px;top:12px;width:576px;height:12px;background:#fdfdfe"></div>
<div class="b" style="left:1380px;top:14px;width:488px;height:9.500px;background:#e9eef6;border-radius:5px"></div>
<div class="b" style="left:1344px;top:36px;width:576px;height:.3px;background:#e8e8e8"></div>
<svg style="left:1344px;top:0" width="576" height="60">
<circle cx="6" cy="6" r="3.500" fill="#c5d7f2"/><path d="M4.800 5.500l1.200 1.200 1.200-1.200" stroke="#444" stroke-width=".5" fill="none"/>
<g><rect x="13.500" y="3.500" width="4.500" height="4.500" rx=".8" fill="#e8132c"/><rect x="59.500" y="3.500" width="4.500" height="4.500" rx="2" fill="#8a8a40"/><rect x="104" y="3.500" width="4.500" height="4.500" fill="#444"/><rect x="150" y="3.500" width="4.500" height="4.500" rx="2" fill="#444"/><rect x="195" y="3.500" width="4.500" height="4.500" fill="#3bb09a"/><rect x="240" y="3.500" width="4.500" height="4.500" fill="#e08a3a"/><rect x="286" y="3.500" width="4.500" height="4.500" fill="#04aa6d"/><rect x="330" y="3.500" width="4.500" height="4.500" fill="#3bb09a"/><rect x="377" y="3.500" width="4.500" height="4.500" rx="2" fill="#1a3a7a"/><rect x="422" y="3.500" width="4.500" height="4.500" rx="2" fill="#1a3a7a"/><rect x="467" y="3.500" width="4.500" height="4.500" rx=".8" fill="#e8132c"/></g>
<g stroke="#444" stroke-width=".45" fill="none"><path d="M51 4.800l2 2m0-2l-2 2M96 4.800l2 2m0-2l-2 2M141 4.800l2 2m0-2l-2 2M186 4.800l2 2m0-2l-2 2M232 4.800l2 2m0-2l-2 2M276 4.800l2 2m0-2l-2 2M321 4.800l2 2m0-2l-2 2M367 4.800l2 2m0-2l-2 2M412 4.800l2 2m0-2l-2 2M457 4.800l2 2m0-2l-2 2M502 4.800l2 2m0-2l-2 2"/><path d="M512.200 6h3.200M513.800 4.400v3.200" stroke-width=".6"/><path d="M540 6h3M553.500 4.800h2.500v2.500h-2.500zM566 4.800l2.500 2.500m0-2.500l-2.500 2.500" stroke-width=".55"/>
<path d="M4 19h4M4 19l1.500-1.500M4 19l1.500 1.500M19 19h-4M19 19l-1.500-1.500M19 19l-1.500 1.500" stroke-width=".6"/><path d="M30.200 17.800a2.200 2.200 0 1 0 .5 1.700M30.500 16.800v1.300h-1.300" stroke-width=".6"/>
<circle cx="40.500" cy="19" r="3" fill="#fff" stroke="none"/><rect x="39" y="17.800" width="3" height="2.500" stroke-width=".4"/>
<path d="M8.500 28h3v3h-3zM8.500 29.500h3M10 28v3" stroke-width=".7"/><path d="M507 17l2.500 2 1.500-1" stroke-width=".5"/><path d="M515 16.800l.8 1.800 2 .2-1.500 1.300.5 2-1.800-1-1.800 1 .5-2-1.500-1.300 2-.2z" stroke-width=".45"/><rect x="527" y="17" width="4" height="4" stroke-width=".5"/><path d="M541 17l1 4 1-2.500 1 2.500 1-4" stroke-width=".5"/><circle cx="556" cy="19" r="2.500" fill="#1a6be0" stroke="none"/><circle cx="570" cy="17" r=".4"/><circle cx="570" cy="19" r=".4"/><circle cx="570" cy="21" r=".4"/></g>
<rect x="24" y="28" width="2.500" height="3" fill="#e83a3a"/><circle cx="71" cy="30" r="1.700" fill="#4285f4"/><rect x="92.500" y="28" width="4" height="3.500" rx=".8" fill="#e8132c"/><rect x="139" y="27.800" width="4" height="4" fill="#e08a3a"/><rect x="185" y="28" width="4" height="3.500" rx=".8" fill="#e8132c"/><rect x="210" y="27.800" width="4" height="4" fill="#e08a3a"/><circle cx="260" cy="30" r="2" fill="#444"/><circle cx="304.500" cy="30" r="2" fill="#1a3a7a"/><circle cx="349" cy="30" r="2" fill="#8a8a40"/><rect x="391" y="28" width="4" height="3.500" rx=".8" fill="#e8132c"/><rect x="437" y="27.800" width="4" height="4" fill="#a82a2a"/><circle cx="467" cy="30" r="2" fill="#5a6aaa"/><rect x="510" y="28" width="4" height="3.500" rx=".8" fill="#e8132c"/>
<path d="M5.500 40.500l2.800 7 2.200-4.500 2.200 4.500 2.600-7" stroke="#04aa6d" stroke-width="1.700" fill="none"/><text x="16" y="42" font-size="2.800" fill="#04aa6d">3</text>
<rect x="153" y="39" width="52" height="11" rx="5.500" fill="#fff" stroke="#ccc" stroke-width=".4"/>
<circle cx="199" cy="44.300" r="1.900" fill="none" stroke="#222" stroke-width=".6"/><path d="M200.300 45.800l1.400 1.400" stroke="#222" stroke-width=".6"/>
<circle cx="219" cy="44" r="2.500" fill="#111"/><path d="M219 41.500a2.500 2.500 0 0 1 0 5z" fill="#fff"/>
<g fill="#a06ef0"><path d="M375.500 43l.7 1.300 1.300.7-1.300.7-.7 1.300-.7-1.300-1.300-.7 1.300-.7z"/><rect x="400.500" y="42.800" width="4.300" height="3" rx=".8"/><path d="M443.500 42.800l-1.500 1.700 1.500 1.700M446 42.800l1.500 1.700-1.500 1.700" stroke="#a06ef0" stroke-width=".5" fill="none"/><path d="M484 42.500h1l1 3h3l.8-2.200H486" stroke="#a06ef0" stroke-width=".5" fill="none"/></g>
<path d="M563.500 56.500l1.500 1.500-1.500 1.500" stroke="#fff" stroke-width=".6" fill="none"/>
</svg>
<div class="ch3">
<i style="left:1365.500px;top:6px">ABBA Waterloo</i><i style="left:1411.500px;top:6px">Elverar – fant...</i><i style="left:1456px;top:6px">GIMP - GNU I...</i><i style="left:1501px;top:6px">view-source:ht</i><i style="left:1546.500px;top:6px">W3Schools Try</i><i style="left:1592px;top:6px">Aštíro webová</i><i style="left:1637px;top:6px;color:#111">HTML Tutorial</i><i style="left:1682.500px;top:6px">W3Schools Try</i><i style="left:1728px;top:6px">Jan Potyš</i><i style="left:1773px;top:6px">Lekce 1 - Úvod</i><i style="left:1819px;top:6px">Panel kanálu -</i>
</div>
<i style="left:1391px;top:19px;font-size:4.200px;color:#333">w3schools.com/html/default.asp</i>
<div class="bk">
<i style="left:1370px;top:30px">Seznam – najdu tu...</i><i style="left:1417px;top:30px">Google</i><i style="left:1441px;top:30px">Zamina Waka Waka...</i><i style="left:1485px;top:30px">Aštíro webová strán...</i><i style="left:1530px;top:30px">YouTube</i><i style="left:1557px;top:30px">Aštíro webová strán...</i><i style="left:1603px;top:30px">Aštíro webová strán...</i><i style="left:1649px;top:30px">Lekce 1 - Úvod do C...</i><i style="left:1695px;top:30px">Elverar – fantasy bu...</i><i style="left:1741px;top:30px">(2) How to Fix Error...</i><i style="left:1788px;top:30px">xStation 5</i><i style="left:1815px;top:30px">Volumes indikátor |...</i><i style="left:1861px;top:30px">The NEW TradingVi...</i><i style="left:1908px;top:30px;font-weight:bold">»</i>
</div>
<i style="left:1349px;top:48.500px;font-size:2.600px;color:#04aa6d;font-weight:bold">schools</i>
<div class="tp">
<i style="left:1371px;top:44.500px">Tutorials ▾</i><i style="left:1402px;top:44.500px">Exercises ▾</i><i style="left:1433px;top:44.500px">Certificates ▾</i><i style="left:1469px;top:44.500px">Services ▾</i>
<i style="left:1501.500px;top:44.800px;color:#777">Search...</i>
<i style="left:1720px;top:45px">Plus</i><i style="left:1749px;top:45px">For Teachers</i><i style="left:1794px;top:45px">Spaces</i><i style="left:1827px;top:45px">Get Certified</i>
</div>
<div class="b" style="left:1888px;top:39px;width:23px;height:11.500px;background:#d9eee1;border-radius:0 6px 6px 0"></div>
<div class="b" style="left:1860.500px;top:39px;width:28px;height:11.500px;background:#04aa6d;border-radius:6px"></div>
<i style="left:1867px;top:45px;font-size:4.400px;color:#fff;font-weight:bold">Sign Up</i><i style="left:1891px;top:45px;font-size:4.400px;color:#1b5e3f">Log in</i>

<div class="b" style="left:1344px;top:53px;width:576px;height:10px;background:#282a35"></div>
<div class="b" style="left:1344px;top:53px;width:21px;height:10px;background:#04aa6d"></div>
<div class="nv">
<i style="left:1349px;top:58px">HTML</i><i style="left:1370px;top:58px">CSS</i><i style="left:1387px;top:58px">JAVASCRIPT</i><i style="left:1422px;top:58px">SQL</i><i style="left:1440px;top:58px">PYTHON</i><i style="left:1467px;top:58px">JAVA</i><i style="left:1487px;top:58px">PHP</i><i style="left:1505px;top:58px">HOW TO</i><i style="left:1531px;top:58px">W3.CSS</i><i style="left:1557px;top:58px">C</i><i style="left:1569px;top:58px">C++</i><i style="left:1586px;top:58px">C#</i><i style="left:1601px;top:58px">BOOTSTRAP</i><i style="left:1636px;top:58px">REACT</i><i style="left:1659px;top:58px">MYSQL</i><i style="left:1683px;top:58px">JQUERY</i><i style="left:1709px;top:58px">EXCEL</i><i style="left:1732px;top:58px">XML</i><i style="left:1749px;top:58px">DJANGO</i><i style="left:1777px;top:58px">NUMPY</i><i style="left:1801px;top:58px">PANDAS</i><i style="left:1827px;top:58px">NODEJS</i><i style="left:1854px;top:58px">R</i><i style="left:1866px;top:58px">TYPESCRIPT</i><i style="left:1901px;top:58px">AN</i>
</div>
<svg style="left:1344px;top:0" width="576" height="60"><path d="M563.500 56.500l1.700 1.500-1.700 1.500" stroke="#fff" stroke-width=".7" fill="none"/></svg>

<!-- w3 left sidebar -->
<div class="b" style="left:1344px;top:63px;width:70.500px;height:246px;background:#f1f2f3"></div>
<div class="b" style="left:1414.500px;top:63px;width:4.500px;height:246px;background:#f1f1f1"></div>
<div class="b" style="left:1415px;top:66px;width:3.500px;height:77px;background:#c1c1c1"></div>
<div class="b" style="left:1344px;top:78px;width:70px;height:7.500px;background:#04aa6d"></div>
<i style="left:1349px;top:72px;font-size:6.200px;color:#222">HTML Tutorial</i>
<div class="sd">
<i style="left:1356px;top:82px;color:#fff">HTML HOME</i><i style="left:1356px;top:89.500px">HTML Introduction</i><i style="left:1356px;top:97px">HTML Editors</i><i style="left:1356px;top:105px">HTML Basic</i><i style="left:1356px;top:112.700px">HTML Elements</i><i style="left:1356px;top:120px">HTML Attributes</i><i style="left:1356px;top:128px">HTML Headings</i><i style="left:1356px;top:135.500px">HTML Paragraphs</i><i style="left:1356px;top:143px">HTML Styles</i><i style="left:1356px;top:151px">HTML Formatting</i><i style="left:1356px;top:158.500px">HTML Quotations</i><i style="left:1356px;top:166px">HTML Comments</i><i style="left:1356px;top:174px">HTML Colors</i><i style="left:1356px;top:181px">HTML CSS</i><i style="left:1356px;top:189px">HTML Links</i><i style="left:1356px;top:196.700px">HTML Images</i><i style="left:1356px;top:204px">HTML Favicon</i><i style="left:1356px;top:212px">HTML Page Title</i><i style="left:1356px;top:219.700px">HTML Tables</i><i style="left:1356px;top:227px">HTML Lists</i><i style="left:1356px;top:235px">HTML Block &amp; Inline</i><i style="left:1356px;top:242.700px">HTML Div</i><i style="left:1356px;top:250px">HTML Classes</i><i style="left:1356px;top:257.700px">HTML Id</i><i style="left:1356px;top:265.700px">HTML Iframes</i><i style="left:1356px;top:273px">HTML JavaScript</i><i style="left:1356px;top:281px">HTML File Paths</i><i style="left:1356px;top:288.300px">HTML Head</i><i style="left:1356px;top:296px">HTML Layout</i><i style="left:1356px;top:304px">HTML Responsive</i>
</div>
<!-- w3 main -->
<i class="mn" style="left:1429px;top:74.500px">With our "Try it Yourself" editor, you can edit the HTML code and view the result:</i>
<div class="b" style="left:1423px;top:85px;width:384px;height:130px;background:#e7e9eb;border-radius:1.500px"></div>
<div class="b" style="left:1429px;top:106px;width:372px;height:86px;background:#fff;border-left:1px solid #04aa6d;box-sizing:border-box"></div>
<i style="left:1429px;top:96.500px;font-size:7px;color:#222">Example</i>
<div class="cd">
<i style="left:1434px;top:111.700px"><b>&lt;</b><b>!DOCTYPE</b> <em>html</em><b>&gt;</b></i>
<i style="left:1434px;top:118.300px"><b>&lt;html&gt;</b></i>
<i style="left:1434px;top:125px"><b>&lt;head&gt;</b></i>
<i style="left:1434px;top:132px"><b>&lt;title&gt;</b>Page Title<b>&lt;/title&gt;</b></i>
<i style="left:1434px;top:138.700px"><b>&lt;/head&gt;</b></i>
<i style="left:1434px;top:145.500px"><b>&lt;body&gt;</b></i>
<i style="left:1434px;top:159px"><b>&lt;h1&gt;</b>This is a Heading<b>&lt;/h1&gt;</b></i>
<i style="left:1434px;top:165.700px"><b>&lt;p&gt;</b>This is a paragraph.<b>&lt;/p&gt;</b></i>
<i style="left:1434px;top:179px"><b>&lt;/body&gt;</b></i>
<i style="left:1434px;top:186px"><b>&lt;/html&gt;</b></i>
</div>
<div class="b" style="left:1429px;top:196.500px;width:44px;height:11px;background:#04aa6d;border-radius:1px"></div>
<i style="left:1434px;top:202px;font-size:4.400px;color:#fff;font-weight:bold">Try it Yourself »</i>
<i class="mn" style="left:1429px;top:226px;font-weight:bold;color:#000">Click on the "Try it Yourself" button to see how it works.</i>
<div class="b" style="left:1423px;top:235px;width:384px;height:.4px;background:#eee"></div>
<i style="left:1429px;top:249px;font-size:9.600px;color:#222">HTML Examples</i>
<i class="mn" style="left:1429px;top:264.500px">In this HTML tutorial, you will find more than 200 examples. With our online "Try it Yourself" editor, you can edit and test each example yourself!</i>
<div class="b" style="left:1429px;top:273px;width:59px;height:11px;background:#e7e9eb;border-radius:1px"></div>
<i style="left:1434px;top:278.700px;font-size:4.400px;color:#111;font-weight:bold">Go to HTML Examples!</i>
<div class="b" style="left:1423px;top:290px;width:384px;height:.4px;background:#eee"></div>
<div class="ad"><i style="left:1457px;top:299px">ADVERTISEMENT</i><i style="left:1554px;top:299px">ADVERTISEMENT</i><i style="left:1651px;top:299px">ADVERTISEMENT</i></div>
<div class="b" style="left:1427px;top:302px;width:91px;height:8px;background:#000"></div>
<div class="b" style="left:1524px;top:302px;width:90px;height:8px;background:#2f27e6"></div>
<div class="b" style="left:1621px;top:302px;width:91px;height:8px;background:#3c1a62"></div>
<div class="b" style="left:1508px;top:302px;width:10px;height:4px;background:#dde8f5"></div><div class="b" style="left:1604px;top:302px;width:10px;height:4px;background:#dde8f5"></div><div class="b" style="left:1702px;top:302px;width:10px;height:4px;background:#dde8f5"></div>
<i style="left:1626px;top:307.500px;font-size:6px;color:#ddd;font-weight:bold">kingbet</i>
<!-- w3 right column -->
<div class="b" style="left:1810px;top:63px;width:.4px;height:247px;background:#eee"></div>
<div class="b" style="left:1818px;top:63px;width:89px;height:10px;background:#0e4f3e;border:.5px solid #118a60;border-top:0;box-sizing:border-box"></div>
<div class="b" style="left:1818px;top:83px;width:89.500px;height:90px;background:#1e1439;border:.7px solid #8c5fe0;box-sizing:border-box"></div>
<i style="left:1862.700px;top:99px;font-size:19.300px;font-weight:bold;color:#fff4a3;transform:translateX(-50%)">FULL</i>
<i style="left:1862.700px;top:120px;font-size:19.500px;font-weight:bold;color:#fff4a3;transform:translateX(-50%)">ACCESS</i>
<i style="left:1862.700px;top:137px;font-size:4.700px;color:#fff;transform:translateX(-50%)">to all courses, certifications,</i>
<i style="left:1862.700px;top:143px;font-size:4.700px;color:#fff;transform:translateX(-50%)">and resources</i>
<div class="b" style="left:1838px;top:150px;width:49px;height:11px;background:#9763f6;border-radius:5.500px"></div>
<i style="left:1862.700px;top:155.800px;font-size:4.500px;font-weight:bold;color:#fff;transform:translateX(-50%)">Read more!</i>
<svg style="left:1892px;top:160px" width="12" height="10"><path d="M.5 .5l1.800 5 1.500-3 1.500 3L7.500 .5" stroke="#fff" stroke-width="1.300" fill="none"/></svg>
<i style="left:1862.700px;top:183.700px;font-size:5.400px;color:#444;transform:translateX(-50%)">COLOR PICKER</i>
<div class="b" style="left:1851px;top:191px;width:23.500px;height:21px;clip-path:polygon(25% 0,75% 0,100% 50%,75% 100%,25% 100%,0 50%);background:radial-gradient(circle,#fff 5%,rgba(255,255,255,0) 60%),conic-gradient(#ff0,#0f0,#0ff,#00f,#f0f,#f00,#ff0)"></div>
<svg style="left:1835px;top:218px" width="60" height="14">
<rect x="1" y="3.500" width="9.500" height="7" rx="2" fill="#000"/><path d="M4.800 5.300l2.800 1.700-2.800 1.700z" fill="#fff"/>
<rect x="13" y="3" width="7.500" height="7.500" rx="1" fill="#111"/><path d="M14.700 6v3M16.400 9V6M16.400 7q1.800-1.500 2.500 .3V9" stroke="#fff" stroke-width=".7" fill="none"/>
<path d="M24.500 4q3.500-1.200 7 0 1.500 3 1 6-1 .8-2 .8L30 9.500h-4l-.5 1.300q-1 0-2-.8-.5-3 1-6z" fill="#111"/><circle cx="26.500" cy="7" r=".9" fill="#fff"/><circle cx="29.500" cy="7" r=".9" fill="#fff"/>
<rect x="36" y="3" width="7.500" height="7.500" rx="1" fill="#111"/><path d="M41.500 4.800h-1q-.8 0-.8 1v4.700M38.500 7h2.800" stroke="#fff" stroke-width=".8" fill="none"/>
<rect x="47.500" y="3" width="7.500" height="7.500" rx="1.800" fill="none" stroke="#111" stroke-width=".8"/><circle cx="51.200" cy="6.700" r="1.800" fill="none" stroke="#111" stroke-width=".7"/><path d="M48 4l6.500 6m0-6L48 10" stroke="#111" stroke-width=".3"/>
</svg>
<i class="ad" style="left:1847.500px;top:242.500px">ADVERTISEMENT</i>
<div class="b" style="left:1817px;top:245px;width:91px;height:51.500px;background:#000;border:.4px solid #999;box-sizing:border-box"></div>
<i class="ad" style="left:1847px;top:305px">ADVERTISEMENT</i>
<div class="b" style="left:1838px;top:308px;width:40px;height:2px;background:#5a2dd8"></div>
<!-- w3 scrollbar -->
<div class="b" style="left:1915px;top:63px;width:5px;height:247px;background:#f1f1f1"></div>
<div class="b" style="left:1915.500px;top:68px;width:4px;height:44px;background:#c1c1c1"></div>

<!-- taskbar 3 -->
<div class="b" style="left:1344px;top:309.500px;width:576px;height:14.500px;background:linear-gradient(90deg,#e9efe4 0,#e4f4e2 15%,#d8f2dc 33%,#e4f5ea 50%,#d0eee6 68%,#c8eeee 85%,#d6eee8 100%)"></div>
<div class="b" style="left:1448px;top:312px;width:65px;height:9.200px;background:#f1f8f3;border-radius:4.600px"></div>
<svg style="left:1344px;top:309.500px" width="576" height="15">
<path d="M6 7q1-3 3-3 2-1 2.500 1" fill="#f0b040"/><path d="M5.500 11q-1-3.500 2.500-3.500 2.500-1.500 4 0 2.500 0 2 3.500z" fill="#6ea6e6"/>
<g fill="#1a8fe0"><rect x="92.500" y="3.500" width="3.400" height="3.400"/><rect x="96.300" y="3.500" width="3.400" height="3.400"/><rect x="92.500" y="7.300" width="3.400" height="3.400"/><rect x="96.300" y="7.300" width="3.400" height="3.400"/></g>
<circle cx="111" cy="7" r="1.600" fill="none" stroke="#444" stroke-width=".6"/><path d="M112.200 8.200l1.100 1.100" stroke="#444" stroke-width=".6"/>
<g transform="translate(176 7.300) scale(.8)"><use href="#tb"/></g>
<g stroke="#555" stroke-width=".5" fill="none"><path d="M513 8l1.500-1.500L516 8"/><path d="M522 6q2-1.500 4 0M523 7.500q1-.8 2 0" /><path d="M528.500 5.500l1.500 3 1.500-3"/><rect x="536" y="5.500" width="4" height="3.500" fill="#555"/><path d="M566 5q1.500 0 1.500 3l.8 1h-4.600l.8-1q0-3 1.500-3z"/></g>
</svg>
<i style="left:1359px;top:314.500px;font-size:3.300px;color:#222">8°C</i><i style="left:1359px;top:319.300px;font-size:3.300px;color:#555">Převát. oblačno</i>
<i style="left:1459px;top:316.700px;font-size:3.700px;color:#666">Hledat</i>
<i style="right:13px;top:314.500px;font-size:3.200px;color:#333">1:25</i><i style="right:13px;top:319.300px;font-size:3.200px;color:#333">19.12.2024</i>
</div></body></html>
